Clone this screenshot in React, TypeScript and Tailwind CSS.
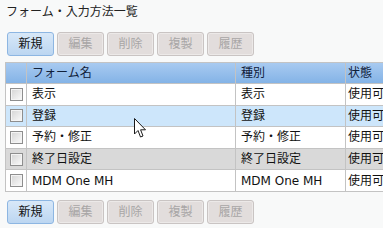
import React from "react";

const FONT = '"DejaVu Sans", "Noto Sans CJK JP", sans-serif';

type Row = { name: string; kind: string; state: string; tone: "plain" | "hover" | "selected" };

const rows: Row[] = [
  { name: "表示", kind: "表示", state: "使用可", tone: "plain" },
  { name: "登録", kind: "登録", state: "使用可", tone: "hover" },
  { name: "予約・修正", kind: "予約・修正", state: "使用可", tone: "plain" },
  { name: "終了日設定", kind: "終了日設定", state: "使用可", tone: "selected" },
  { name: "MDM One MH", kind: "MDM One MH", state: "使用可", tone: "plain" },
];

const Toolbar = () => {
  const labels = ["新規", "編集", "削除", "複製", "履歴"];
  return (
    <div className="flex gap-[3px] pl-[7px]">
      {labels.map((label, i) =>
        i === 0 ? (
          <button
            key={label}
            className="w-[47px] h-[24px] rounded-[3px] border border-[#8db6e2] bg-gradient-to-b from-[#d8e8f8] to-[#bcd6f1] text-[12px] text-[#111] leading-none"
          >
            {label}
          </button>
        ) : (
          <button
            key={label}
            disabled
            className="w-[47px] h-[24px] rounded-[3px] border border-[#c9c4c3] bg-[#e2dddc] text-[12px] text-[#a8a6a6] leading-none shadow-[inset_0_0_0_1px_#ece9e8]"
          >
            {label}
          </button>
        )
      )}
    </div>
  );
};

const Checkbox = () => (
  <div className="mx-auto w-[13px] h-[13px] border border-[#8e8e8e] bg-gradient-to-br from-[#d4d4d4] to-[#fbfbfb] shadow-[inset_0_0_0_1px_#f4f4f4]" />
);

const Cursor = () => (
  <svg
    className="absolute left-[134px] top-[118px]"
    width="14"
    height="21"
    viewBox="0 0 14 21"
  >
    <path
      d="M0.5 0.5 L0.5 16 L4 12.5 L6.5 19 L9 18 L6.6 11.8 L11.5 11.8 Z"
      fill="#fff"
      stroke="#1a1a1a"
      strokeWidth="1"
      strokeLinejoin="round"
    />
  </svg>
);

export default function App() {
  const toneClass = {
    plain: "bg-white",
    hover: "bg-[#cde6fb]",
    selected: "bg-[#d9d9d9]",
  };

  return (
    <div
      className="relative w-[383px] h-[228px] overflow-hidden bg-[#f8f9f9] text-[#111]"
      style={{ fontFamily: FONT }}
    >
      <div className="h-[32px] pl-[6px] pt-[4px] text-[12px] leading-[16px] text-[#222]">
        フォーム・入力方法一覧
      </div>

      <Toolbar />

      <div className="mt-[6px] ml-[5px]">
        <table className="border-collapse table-fixed w-[378px] text-[12px] leading-none">
          <colgroup>
            <col className="w-[21px]" />
            <col className="w-[209px]" />
            <col className="w-[110px]" />
            <col className="w-[38px]" />
          </colgroup>
          <thead>
            <tr className="h-[21px] bg-gradient-to-b from-[#a8caf0] to-[#82b2e6]">
              <th className="border border-[#c3c3c3]" />
              <th className="border border-[#c3c3c3] pl-[5px] text-left font-normal text-[#10203a]">
                フォーム名
              </th>
              <th className="border border-[#c3c3c3] pl-[5px] text-left font-normal text-[#10203a]">
                種別
              </th>
              <th className="border border-y-[#c3c3c3] border-l-[#c3c3c3] border-r-0 pl-[2px] text-left font-normal text-[#10203a]">
                状態
              </th>
            </tr>
          </thead>
          <tbody>
            {rows.map((row) => (
              <tr key={row.name} className={`h-[21.6px] ${toneClass[row.tone]}`}>
                <td className="border border-[#c3c3c3] align-middle">
                  <Checkbox />
                </td>
                <td className="border border-[#c3c3c3] pl-[5px] whitespace-nowrap">{row.name}</td>
                <td className="border border-[#c3c3c3] pl-[5px] whitespace-nowrap">{row.kind}</td>
                <td className="border border-y-[#c3c3c3] border-l-[#c3c3c3] border-r-0 pl-[2px] whitespace-nowrap">
                  {row.state}
                </td>
              </tr>
            ))}
          </tbody>
        </table>
      </div>

      <div className="mt-[8px]">
        <Toolbar />
      </div>

      <Cursor />
    </div>
  );
}
